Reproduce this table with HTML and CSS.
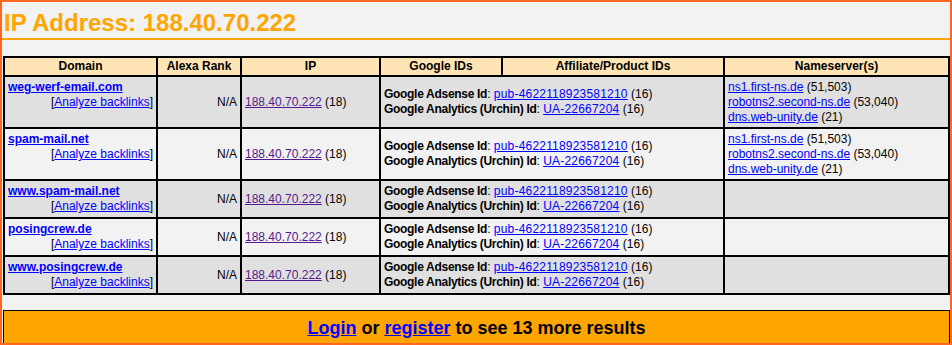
FILE: index.html
```
<!DOCTYPE html>
<html>
<head>
<meta charset="utf-8">
<title>IP Address: 188.40.70.222</title>
<link rel="stylesheet" href="styles.css">
</head>
<body>
<div class="frame">
  <h1 class="title">IP Address: 188.40.70.222</h1>
  <table class="results">
    <thead>
      <tr>
        <th class="c-domain">Domain</th>
        <th class="c-alexa">Alexa Rank</th>
        <th class="c-ip">IP</th>
        <th class="c-google">Google IDs</th>
        <th class="c-aff">Affiliate/Product IDs</th>
        <th class="c-ns">Nameserver(s)</th>
      </tr>
    </thead>
    <tbody>
      <tr class="shade">
        <td class="domain"><a class="dom" href="#">weg-werf-email.com</a><div class="analyze">[<a href="#">Analyze backlinks</a>]</div></td>
        <td class="alexa">N/A</td>
        <td class="ip"><a class="visited" href="#">188.40.70.222</a> (18)</td>
        <td class="ids" colspan="2"><b>Google Adsense Id</b>: <a href="#">pub-4622118923581210</a> (16)<br><b>Google Analytics (Urchin) Id</b>: <a href="#">UA-22667204</a> (16)</td>
        <td class="ns"><a href="#">ns1.first-ns.de</a> (51,503)<br><a href="#">robotns2.second-ns.de</a> (53,040)<br><a href="#">dns.web-unity.de</a> (21)</td>
      </tr>
      <tr class="plain">
        <td class="domain"><a class="dom" href="#">spam-mail.net</a><div class="analyze">[<a href="#">Analyze backlinks</a>]</div></td>
        <td class="alexa">N/A</td>
        <td class="ip"><a class="visited" href="#">188.40.70.222</a> (18)</td>
        <td class="ids" colspan="2"><b>Google Adsense Id</b>: <a href="#">pub-4622118923581210</a> (16)<br><b>Google Analytics (Urchin) Id</b>: <a href="#">UA-22667204</a> (16)</td>
        <td class="ns"><a href="#">ns1.first-ns.de</a> (51,503)<br><a href="#">robotns2.second-ns.de</a> (53,040)<br><a href="#">dns.web-unity.de</a> (21)</td>
      </tr>
      <tr class="shade">
        <td class="domain"><a class="dom" href="#">www.spam-mail.net</a><div class="analyze">[<a href="#">Analyze backlinks</a>]</div></td>
        <td class="alexa">N/A</td>
        <td class="ip"><a class="visited" href="#">188.40.70.222</a> (18)</td>
        <td class="ids" colspan="2"><b>Google Adsense Id</b>: <a href="#">pub-4622118923581210</a> (16)<br><b>Google Analytics (Urchin) Id</b>: <a href="#">UA-22667204</a> (16)</td>
        <td class="ns"></td>
      </tr>
      <tr class="plain">
        <td class="domain"><a class="dom" href="#">posingcrew.de</a><div class="analyze">[<a href="#">Analyze backlinks</a>]</div></td>
        <td class="alexa">N/A</td>
        <td class="ip"><a class="visited" href="#">188.40.70.222</a> (18)</td>
        <td class="ids" colspan="2"><b>Google Adsense Id</b>: <a href="#">pub-4622118923581210</a> (16)<br><b>Google Analytics (Urchin) Id</b>: <a href="#">UA-22667204</a> (16)</td>
        <td class="ns"></td>
      </tr>
      <tr class="shade">
        <td class="domain"><a class="dom" href="#">www.posingcrew.de</a><div class="analyze">[<a href="#">Analyze backlinks</a>]</div></td>
        <td class="alexa">N/A</td>
        <td class="ip"><a class="visited" href="#">188.40.70.222</a> (18)</td>
        <td class="ids" colspan="2"><b>Google Adsense Id</b>: <a href="#">pub-4622118923581210</a> (16)<br><b>Google Analytics (Urchin) Id</b>: <a href="#">UA-22667204</a> (16)</td>
        <td class="ns"></td>
      </tr>
    </tbody>
  </table>
  <div class="more"><a href="#">Login</a> or <a href="#">register</a> to see 13 more results</div>
</div>
</body>
</html>
```

FILE: styles.css
```
html, body {
  margin: 0;
  padding: 0;
}
body {
  font-family: "Liberation Sans", Arial, sans-serif;
  font-size: 12px;
  line-height: 15px;
  color: #000;
}
.frame {
  box-sizing: border-box;
  width: 952px;
  height: 345px;
  border: 2px solid #ff6620;
  background: #f2f2f2;
  overflow: hidden;
}
.title {
  margin: 7px 0 0 0;
  padding: 0 0 1px 2px;
  font-size: 24px;
  line-height: 28px;
  font-weight: bold;
  color: #ffa500;
  border-bottom: 2px solid #ffa500;
}
.results {
  box-sizing: border-box;
  width: 947px;
  margin: 16px 0 0 1px;
  border: 2px solid #000;
  border-collapse: separate;
  border-spacing: 0;
  table-layout: fixed;
}
.results th,
.results td {
  border-right: 2px solid #000;
  border-bottom: 2px solid #000;
  padding: 3px 3px;
}
.results th:last-child,
.results td:last-child {
  border-right: 0;
}
.results tbody tr:last-child td {
  border-bottom: 0;
}
.results th {
  background: #ffe4b5;
  padding-top: 1px;
  padding-bottom: 1px;
  font-weight: bold;
  text-align: center;
}
.c-domain { width: 145px; }
.c-alexa { width: 76px; }
.c-ip { width: 131px; }
.c-google { width: 114px; }
.c-aff { width: 214px; }
.c-ns { width: 217px; }
.shade td { background: #e0e0e0; }
.plain td { background: #f2f2f2; }
.results td {
  vertical-align: middle;
}
.results td.domain {
  vertical-align: top;
}
.results td.ns {
  padding-bottom: 2px;
}
.alexa {
  text-align: right;
}
.ids b {
  letter-spacing: -0.3px;
}
.ids a {
  letter-spacing: 0.2px;
}
a {
  color: #0000ff;
  text-decoration: underline;
}
a.visited {
  color: #551a8b;
}
.dom {
  font-weight: bold;
}
.analyze {
  text-align: right;
}
.more {
  box-sizing: border-box;
  width: 947px;
  margin: 15px 0 0 1px;
  border: 1px solid #000;
  background: #ffa500;
  text-align: center;
  font-size: 18px;
  line-height: 21px;
  font-weight: bold;
  padding: 7px 0;
}
```
